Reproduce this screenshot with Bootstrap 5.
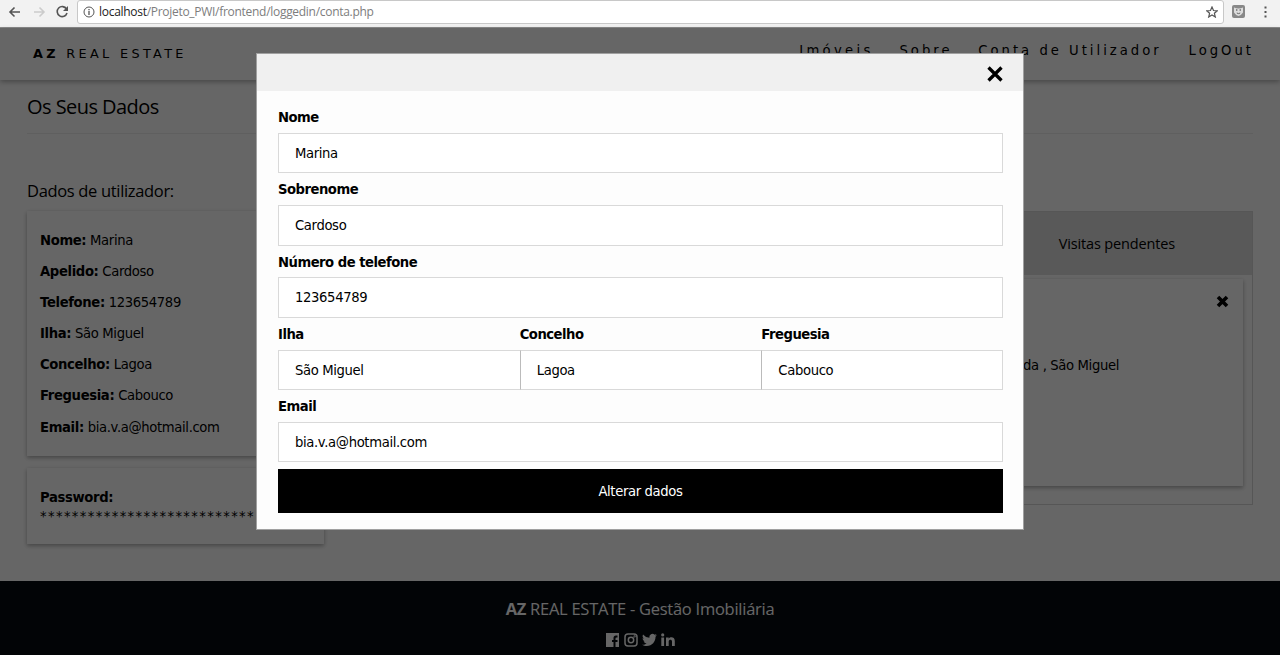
<!DOCTYPE html>
<html lang="pt">
<head>
<meta charset="utf-8">
<title>AZ Real Estate - Conta</title>
<link href="https://cdn.jsdelivr.net/npm/bootstrap@5.3.0/dist/css/bootstrap.min.css" rel="stylesheet">
<script src="https://cdn.jsdelivr.net/npm/bootstrap@5.3.0/dist/js/bootstrap.bundle.min.js" defer></script>
<style>
body{height:655px;font:13.2px/20px "DejaVu Sans",sans-serif;letter-spacing:-.36px;color:#000}
.segoe{font-family:"Open Sans","Noto Sans",sans-serif}
.browser{height:28px;background:#f2f2f2;border-bottom:1px solid #8b8b8b;padding-bottom:3px}
.browser svg{display:block;flex:none}
.address{margin-left:8px;width:1147px;height:24px;border:1px solid #c8c8c8;border-radius:3px;padding:0 5px;font-size:12px;letter-spacing:-.29px;color:#7d7d7d}
.address svg{position:relative}
.address b{font-weight:400;color:#222}
.topnav{height:52px;box-shadow:0 2px 5px rgba(0,0,0,.3);padding:0 25px 0 33px;flex:none}
.brand{letter-spacing:3.35px;font-size:12.8px;padding-top:16px}
.links{gap:25.8px;letter-spacing:3px;padding:13px 1px 0 0}
.links span{white-space:nowrap}
.links span:first-child{letter-spacing:3.3px}
.links span:nth-child(3){margin-right:1px}
.panel{box-shadow:0 2px 4px rgba(0,0,0,.24),0 1px 5px rgba(0,0,0,.1);padding:0 13px}
.title{font-size:20px;height:54px;line-height:54px;border-bottom:1px solid #eee;letter-spacing:-.55px}
.subtitle{font-size:16.5px;letter-spacing:-.33px;line-height:24px;margin:45px 0 8px}
.datacard{width:297px;height:245px;padding-top:14px}
.datacard div{line-height:31.1px}
.passcard{width:297px;height:76px;margin-top:12px;padding-top:20px}
.stars{line-height:18px;letter-spacing:1.37px}
.visits{width:600px;height:294px;margin-top:77px;border:1px solid #d8d8d8}
.tab{height:63px;background:#dedede;font-size:14.5px;letter-spacing:-.15px;padding-right:77px}
.visitcard{margin:4px 9px 0 0;height:207px}
.foot{height:74px;background:#050a0f;color:#fff;font-size:16.5px;letter-spacing:-.26px;flex:none;padding-top:16px}
.overlay{inset:28px 0 0 0;background:rgba(0,0,0,.6);padding-top:25px}
.dialogbox{width:768px;height:477px;background:#fdfdfd;border:1px solid #a0a0a0}
.dialoghead{height:37px;background:#f0f0f0;padding:2px 20px 0 0}
.fields{padding:10px 20px 0 21px}
.fields label{display:block;height:31.8px;line-height:33px;font-weight:700;letter-spacing:-.5px}
.box{height:40.5px;line-height:39px;border:1px solid #d9d9d9;border-radius:0;background:#fff;padding:0 16px;font-size:13.2px;color:#000}
.third+.third .box{border-left-color:#bbb}
.third:not(:last-child) .box{border-right:0}
.send{height:44px;background:#000;color:#fff;border-radius:0;margin-top:6.5px;font-size:13.2px;letter-spacing:-.36px;padding:1px 0 0}
</style>
</head>
<body class="d-flex flex-column overflow-hidden position-relative">
<header class="browser d-flex align-items-center">
<svg width="69" height="24" fill="none" stroke="#555" stroke-width="1.6"><path d="M20 12H10m4.500-4.500L10 12l4.500 4.500"/><path stroke="#ccc" d="M34 12h10m-4.500-4.500L44 12l-4.500 4.500"/><path d="M66.500 9a5 5 0 1 0 .5 4"/><path fill="#555" stroke="none" d="M68 6v5h-5z"/></svg>
<div class="address bg-white d-flex align-items-center segoe">
<svg class="me-1" width="12" height="12" fill="none" stroke="#555"><circle cx="6" cy="6" r="5"/><path d="M6 5v4M6 3v1.200" stroke-width="1.300"/></svg>
<span><b>localhost</b>/Projeto_PWI/frontend/loggedin/conta.php</span>
<svg class="ms-auto" width="12" height="12" fill="none" stroke="#555" stroke-width="1.200"><path d="m6 1 1.500 3.500 3.700.3-2.800 2.500.9 3.700L6 9l-3.300 2 .9-3.700L.8 4.800l3.700-.3z"/></svg>
</div>
<svg width="56" height="24"><rect x="8" y="5" width="13" height="13" rx="2" fill="#888"/><path d="M10 7.500q4.500 2 9 0v5q-4.500 7-9 0z" fill="#ddd"/><path d="M12.800 9v2m3.400-2v2m-3.400 2q1.700 1.200 3.400 0" stroke="#666" fill="none"/><path d="M40.500 6.500h2v2h-2zm0 4.500h2v2h-2zm0 4.500h2v2h-2z" fill="#555"/></svg>
</header>
<nav class="topnav d-flex justify-content-between">
<div class="brand"><b>AZ</b> REAL ESTATE</div>
<div class="links d-flex"><span>Imóveis</span><span>Sobre</span><span>Conta de Utilizador</span><span>LogOut</span></div>
</nav>
<main class="flex-grow-1" style="padding:0 27px">
<div class="title segoe">Os Seus Dados</div>
<div class="d-flex justify-content-between">
<section>
<div class="subtitle segoe">Dados de utilizador:</div>
<div class="panel datacard"><div><b>Nome:</b> Marina</div><div><b>Apelido:</b> Cardoso</div><div><b>Telefone:</b> 123654789</div><div><b>Ilha:</b> São Miguel</div><div><b>Concelho:</b> Lagoa</div><div><b>Freguesia:</b> Cabouco</div><div><b>Email:</b> bia.v.a@hotmail.com</div></div>
<div class="panel passcard"><b>Password:</b><div class="stars">***************************</div></div>
</section>
<section class="visits">
<div class="tab segoe d-flex align-items-center justify-content-end">Visitas pendentes</div>
<div class="panel visitcard d-flex flex-column align-items-end">
<svg width="13" height="13" style="margin:16px 1px 0 0" stroke="#000" stroke-width="3.600"><path d="m2 2 9 9m0-9-9 9"/></svg>
<div style="margin:48px 111px 0 0">Ponta Delgada , São Miguel</div>
</div>
</section>
</div>
</main>
<footer class="foot text-center segoe">
<div class="lh-base"><b>AZ</b> REAL ESTATE - Gestão Imobiliária</div>
<div class="d-flex justify-content-center" style="gap:4px;margin-top:11px">
<svg width="15" height="14" fill="#fff"><path d="M1 0h13v14h-3.500V9h2V7h-2V5.500q0-1 1-1h1v-2H11Q8.500 2.500 8.500 5v2H7v2h1.500v5H1z"/></svg>
<svg width="14" height="14" fill="none" stroke="#fff" stroke-width="1.500"><rect x="1" y="1" width="12" height="12" rx="3"/><circle cx="7" cy="7" r="2.700"/><circle cx="10.600" cy="3.400" r=".4"/></svg>
<svg width="15" height="14" viewBox="0 0 16 14" fill="#fff"><path d="M5 13.500c6 0 9.400-5 9.400-9.400v-.5L16 2l-1.900.5L15.500.7l-2 .8A3.300 3.300 0 0 0 7.900 4.500 9.300 9.300 0 0 1 1.100 1c-1 1.800-.3 3.500 1 4.400L.6 5c0 1.700 1.200 3 2.700 3.300H1.800c.5 1.500 1.700 2.200 3.100 2.300C3.500 11.700 1.900 12.200 0 12c1.500 1 3.200 1.500 5 1.500"/></svg>
<svg width="14" height="14" fill="#fff"><circle cx="1.700" cy="1.900" r="1.600"/><path d="M.3 4.500h2.800V13H.3zm4.700 0h2.700v1.200c1.500-2.200 6.100-2 6.100 2.300v5H11V8.500c0-2.500-3.300-2.400-3.300 0V13H5z"/></svg>
</div>
</footer>
<div class="overlay position-absolute">
<div class="dialogbox mx-auto">
<div class="dialoghead d-flex align-items-center justify-content-end"><svg width="16" height="16" stroke="#000" stroke-width="3.300"><path d="m1.500 1.500 13 13m0-13-13 13"/></svg></div>
<form class="fields">
<label>Nome</label><div class="form-control box">Marina</div>
<label>Sobrenome</label><div class="form-control box">Cardoso</div>
<label>Número de telefone</label><div class="form-control box">123654789</div>
<div class="row g-0"><div class="col third"><label>Ilha</label><div class="form-control box">São Miguel</div></div><div class="col third"><label>Concelho</label><div class="form-control box">Lagoa</div></div><div class="col third"><label>Freguesia</label><div class="form-control box">Cabouco</div></div></div>
<label>Email</label><div class="form-control box">bia.v.a@hotmail.com</div>
<button type="button" class="btn send w-100">Alterar dados</button>
</form>
</div>
</div>
</body>
</html>
